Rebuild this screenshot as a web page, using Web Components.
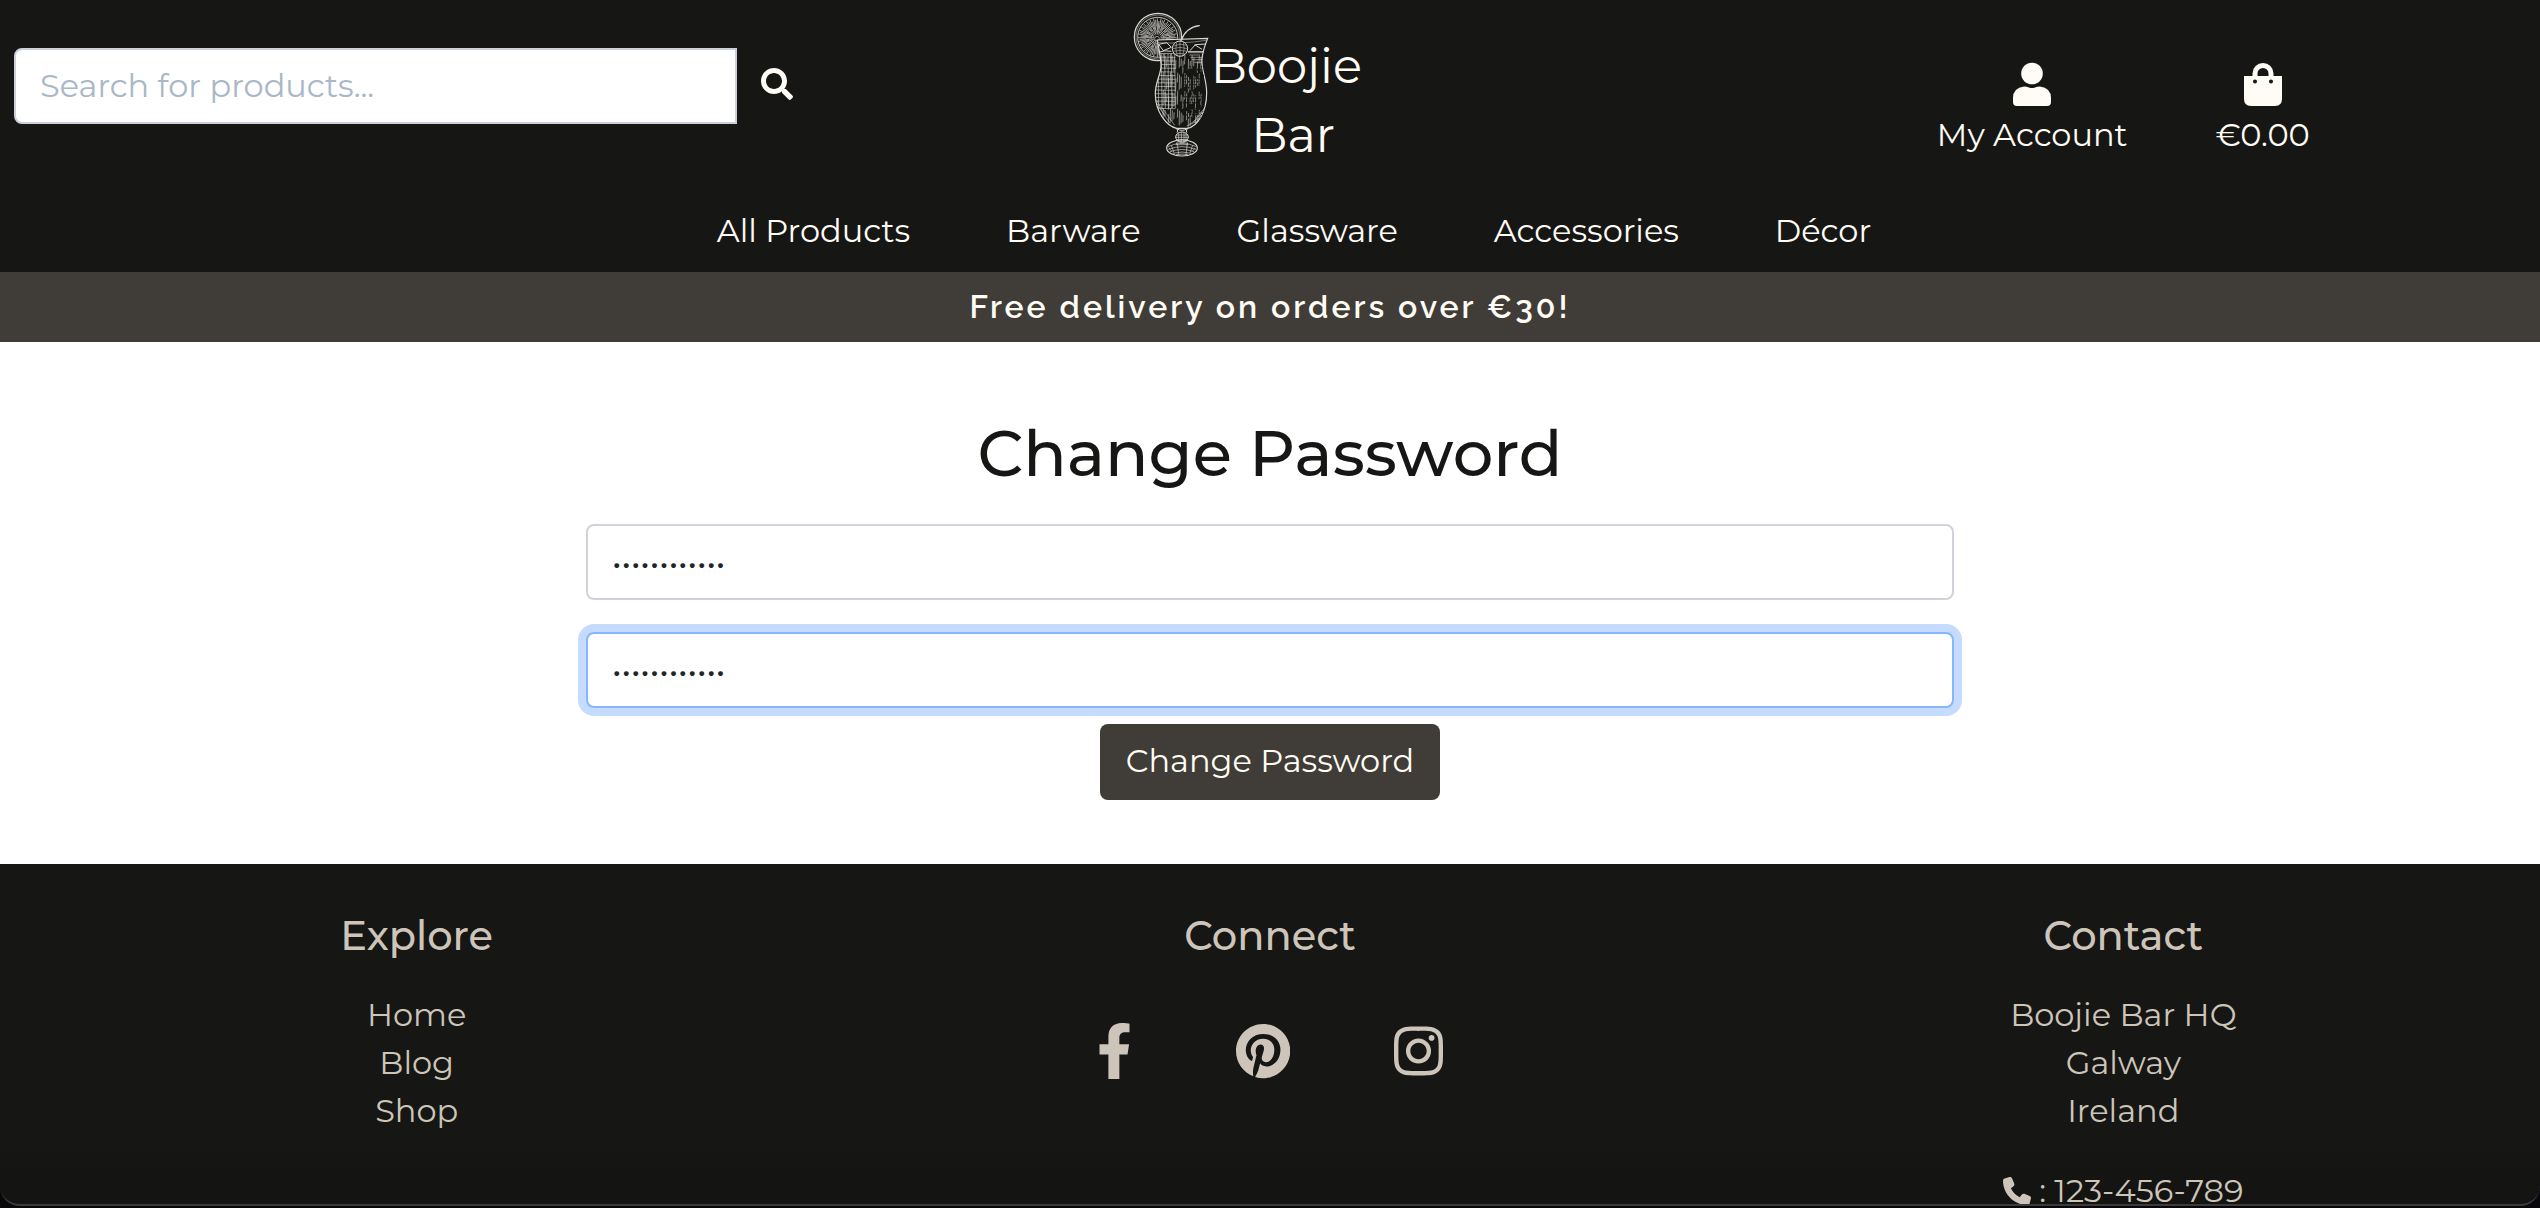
<!DOCTYPE html>
<html lang="en">
<head>
<meta charset="utf-8">
<meta name="viewport" content="width=device-width, initial-scale=1">
<title>Boojie Bar | Change Password</title>
<style>
  :root {
    --ink: #161614;
    --taupe: #403c37;
    --ivory: #fffcf5;
    --sand: #cdc5b9;
  }
  html, body { height: 100%; }
  body {
    margin: 0;
    overflow: hidden;
    background: #fff;
    color: var(--ink);
    font: 400 32px/48px Montserrat, Inter, "Open Sans", sans-serif;
  }
</style>
</head>
<body>
<boojie-page></boojie-page>

<script>
const define = (name, html, setup) => {
  const template = document.createElement('template');
  template.innerHTML = '<style>*,*::before,*::after{box-sizing:border-box}a{color:inherit;text-decoration:none}svg{display:block;fill:currentColor}</style>' + html;
  customElements.define(name, class extends HTMLElement {
    constructor() {
      super();
      this.attachShadow({ mode: 'open' }).append(template.content.cloneNode(true));
    }
    connectedCallback() { if (setup) setup(this, this.shadowRoot); }
  });
};

/* ---- Logo: engraved cocktail glass and the shop name ---- */
const line = (x1, y1, x2, y2) => `M${x1.toFixed(1)} ${y1.toFixed(1)}L${x2.toFixed(1)} ${y2.toFixed(1)}`;
const engraving = () => {
  let spokes = '', hatch = '', grid = '', dots = '';
  for (let i = 0; i < 64; i++) {
    const a = i * Math.PI / 32, inner = [10, 26, 16, 34][i % 4], outer = [58, 54, 59, 50][(i * 3) % 4];
    spokes += line(172 + inner * Math.cos(a), 113 + inner * Math.sin(a), 172 + outer * Math.cos(a), 113 + outer * Math.sin(a));
  }
  for (let i = 0; i < 22; i++) {
    const x = 190 + i * 5.4;
    for (let j = 0; j < 4; j++) {
      const y = 162 + j * 54 + (i * 29) % 23;
      const len = 20 + (i * 17 + j * 13) % 28;
      if ((i + j * 2) % 5 !== 3) hatch += line(x, y, x - 1, y + len);
    }
  }
  for (let y = 160; y < 330; y += 11) grid += line(160, y, 226, y + 1);
  for (let x = 174; x < 226; x += 10) grid += line(x, 160, x + 2, 325);
  for (let y = 200; y < 360; y += 9)
    for (let x = 252; x < 314; x += 9) dots += `<circle cx="${x + (y % 2) * 4}" cy="${y}" r="2.6"/>`;
  return { spokes, hatch, grid, dots };
};
const e = engraving();
const glass = 'M172 120L323 115C314 138 307 160 306 178C303 208 320 236 320 278C320 336 292 380 262 385H230C198 378 167 334 166 284C165 244 184 224 183 194C182 164 176 148 172 120Z';
define('boojie-logo', `
<style>
  :host { display: block; }
  svg { width: 340px; max-width: 100%; margin: 0 auto; }
  text { fill: var(--ivory); font: 400 144px Montserrat, Inter, sans-serif; }
</style>
<a href="#" aria-label="Boojie Bar home">
<svg viewBox="0 0 1020 540">
  <defs><clipPath id="bowl"><path d="${glass}"/></clipPath></defs>
  <g fill="none" stroke="#d9d7d2" stroke-width="2">
    <circle cx="174" cy="111" r="71" stroke-width="3.5"/>
    <circle cx="174" cy="111" r="66" stroke-width="1.5"/>
    <circle cx="173" cy="112" r="60" stroke-width="2.5"/>
    <path d="${e.spokes}" stroke-width="2.2"/>
    <circle cx="171" cy="116" r="7"/>
    <path d="${glass}" fill="#161614" stroke-width="3.5"/>
    <g clip-path="url(#bowl)">
      <path d="${e.hatch}" stroke-width="1.8"/>
      <path d="${e.grid}" stroke-width="1.8"/>
      <g fill="#161614" stroke="none">${e.dots}</g>
      <path d="M178 156Q194 150 214 154M264 155H312M270 152L286 134L318 132M284 134L306 148M176 133L200 128L214 142L190 152Z" stroke-width="3"/>
      <path d="M264 158H310M268 165H300M272 172H306M276 179H308M282 187H306M280 366L314 330M270 372L312 344M288 354L318 320M260 378L300 360M176 320L210 370M170 300L192 345M184 320L224 376" stroke-width="1.7"/>
    </g>
    <path d="M174 128Q250 132 318 121" stroke-width="1.5"/>
    <circle cx="240" cy="146" r="23" fill="#161614" stroke-width="3"/>
    <path d="M221 138Q240 128 260 136M218 146Q240 138 262 146M220 154Q240 148 261 154M226 162Q240 158 255 162M230 127Q224 146 232 167M240 123V169M250 127Q256 146 248 167" stroke-width="1.5"/>
    <path d="M243 122Q258 82 298 77" stroke-width="4" stroke-linecap="round"/>
    <path d="M230 386Q246 396 262 386M230 386Q236 394 231 398M262 386Q256 394 261 398" stroke-width="3"/>
    <ellipse cx="246" cy="411" rx="19" ry="15" stroke-width="3"/>
    <path d="M228 405H264M227 412H265M230 419H262M236 399V423M244 397V426M252 397V426M258 400V422M232 425Q246 433 260 425L264 434H228Z"/>
    <ellipse cx="246" cy="444" rx="46" ry="24" stroke-width="3.5"/>
    <path d="M203 440Q246 420 289 440M205 448Q246 432 287 448M210 455Q246 442 282 455M218 460Q246 452 274 460M228 464Q246 460 264 464M214 436L222 458M232 430L236 464M262 430L258 464M278 436L270 458M206 444L216 454M286 444L276 454" stroke-width="2"/>
  </g>
  <text x="332" y="250">Boojie</text>
  <text x="454" y="456">Bar</text>
</svg></a>`);

/* ---- Product search ---- */
define('product-search', `
<style>
  :host { display: block; }
  form { display: flex; padding: 48px 16px 0 14px; }
  input {
    flex: 1; min-width: 0; height: 76px; padding: 0 24px 2px; border: 2px solid #cbd0dc;
    border-radius: 8px 0 0 8px; background: #fff; color: var(--ink); font: inherit; outline: 0;
  }
  input::placeholder { color: #a9b7c6; opacity: 1; }
  button { width: 80px; height: 72px; padding: 0; border: 0; background: none; color: var(--ivory); display: grid; place-items: center; }
</style>
<form role="search">
  <input type="search" aria-label="Search for products" placeholder="Search for products...">
  <button type="button" aria-label="Search"><svg width="32" height="32" viewBox="0 0 512 512"><path d="M505 442.700L405.300 343c-4.500-4.500-10.600-7-17-7H372c27.600-35.300 44-79.700 44-128C416 93.100 322.900 0 208 0S0 93.100 0 208s93.100 208 208 208c48.300 0 92.700-16.400 128-44v16.300c0 6.400 2.500 12.500 7 17l99.700 99.700c9.400 9.400 24.600 9.400 33.900 0l28.300-28.300c9.400-9.400 9.400-24.600.1-34zM208 336c-70.700 0-128-57.200-128-128 0-70.700 57.200-128 128-128 70.700 0 128 57.200 128 128 0 70.700-57.200 128-128 128z"/></svg></button>
</form>`);

/* ---- Account and bag links ---- */
define('account-links', `
<style>
  :host { display: flex; justify-content: center; gap: 88px; padding-top: 60px; color: var(--ivory); }
  a { display: flex; flex-direction: column; align-items: center; gap: 3px; white-space: nowrap; }
</style>
<a href="#"><svg width="40" height="48" viewBox="0 0 40 48"><circle cx="20" cy="13.500" r="10.800"/><path d="M12 26.500Q15 26.500 17 27.500Q20 28.500 23 27.500Q25 26.500 28 26.500Q39 28 39 38V42Q39 46 35 46H5Q1 46 1 42V38Q1 28 12 26.500Z"/></svg><span>My Account</span></a>
<a href="#"><svg width="40" height="48" viewBox="0 0 40 48"><path fill-rule="evenodd" d="M1 16H9.500V13.500A10.500 10.500 0 0 1 30.500 13.500V16H39V39Q39 46 32 46H8Q1 46 1 39ZM14.500 16H25.500V13.500A5.500 5.500 0 0 0 14.500 13.500ZM14 21.500A2 2 0 1 0 10 21.500A2 2 0 1 0 14 21.500ZM30 21.500A2 2 0 1 0 26 21.500A2 2 0 1 0 30 21.500Z"/></svg><span>€0.00</span></a>`);

/* ---- Header ---- */
define('site-header', `
<style>
  :host { display: block; background: var(--ink); color: var(--ivory); }
  .top { display: grid; grid-template-columns: repeat(3, minmax(0, 1fr)); column-gap: 20px; }
  nav { display: flex; justify-content: center; gap: 96px; padding: 27px 0 17px 48px; white-space: nowrap; }
</style>
<header>
  <div class="top"><product-search></product-search><boojie-logo></boojie-logo><account-links></account-links></div>
  <nav aria-label="Shop"><a href="#">All Products</a><a href="#">Barware</a><a href="#">Glassware</a><a href="#">Accessories</a><a href="#">Décor</a></nav>
</header>`);

define('delivery-banner', `
<style>
  :host { display: block; padding: 11px 0; background: var(--taupe); color: var(--ivory); text-align: center;
    font-family: Raleway, Lato, sans-serif; font-weight: 600; letter-spacing: 3px; }
</style>
<slot></slot>`);

/* ---- Password form ---- */
define('password-field', `
<style>
  :host { display: block; }
  input {
    display: block; width: 100%; height: 76px; padding: 0 24px; border: 2px solid #ced4da; border-radius: 8px;
    background: #fff; color: #212529; font: inherit; outline: 0; caret-color: transparent;
  }
  :host([active]) input, input:focus { border-color: #86b7fe; box-shadow: 0 0 0 8px #c5dbff; }
</style>
<input type="password" value="cocktails123" autocomplete="new-password">`,
(host, root) => root.querySelector('input').setAttribute('aria-label', host.getAttribute('label')));

define('change-password', `
<style>
  :host { display: block; padding: 72px 24px 64px; }
  form { display: flex; flex-direction: column; max-width: 1368px; margin: 0 auto; }
  h1 { margin: 0 0 32px; font-size: 64px; line-height: 78px; font-weight: 500; text-align: center; }
  password-field + password-field { margin-top: 32px; }
  button { align-self: center; height: 76px; margin-top: 16px; padding: 0 26px 2px; border: 0; border-radius: 8px;
    background: var(--taupe); color: var(--ivory); font: inherit; }
</style>
<form>
  <h1>Change Password</h1>
  <password-field label="New password"></password-field>
  <password-field label="New password (again)" active></password-field>
  <button type="button">Change Password</button>
</form>`);

/* ---- Footer ---- */
define('footer-column', `
<style>
  :host { display: block; text-align: center; }
  h2 { margin: 0 0 31px; font-size: 40px; line-height: 48px; font-weight: 500; }
</style>
<h2><slot name="title"></slot></h2><slot></slot>`);

define('site-footer', `
<style>
  :host { display: block; min-height: 344px; background: linear-gradient(var(--ink) 280px, #131311 340px); color: var(--sand); }
  footer { display: grid; grid-template-columns: repeat(3, minmax(0, 1fr)); column-gap: 20px; padding: 48px 0; }
  ul { list-style: none; margin: 0; padding: 0; }
  .social { display: flex; justify-content: center; gap: 104px; padding-top: 32px; }
  .social svg { height: 56px; }
  address { font-style: normal; }
  .phone { display: flex; justify-content: center; align-items: center; gap: 8px; margin-top: 32px; }
</style>
<footer>
  <footer-column><span slot="title">Explore</span>
    <ul><li><a href="#">Home</a></li><li><a href="#">Blog</a></li><li><a href="#">Shop</a></li></ul>
  </footer-column>
  <footer-column><span slot="title">Connect</span>
    <div class="social">
      <a href="#" aria-label="Facebook"><svg viewBox="0 0 320 512"><path d="M279.140 288l14.220-92.660h-88.910v-60.130c0-25.350 12.420-50.060 52.240-50.060h40.420V6.260S260.430 0 225.360 0c-73.220 0-121.080 44.380-121.080 124.720v70.620H22.890V288h81.390v224h100.170V288z"/></svg></a>
      <a href="#" aria-label="Pinterest"><svg viewBox="0 0 496 512"><path d="M496 256c0 137-111 248-248 248-25.600 0-50.200-3.900-73.400-11.100 10.100-16.500 25.200-43.500 30.800-65 3-11.600 15.400-59 15.400-59 8.100 15.400 31.700 28.500 56.800 28.500 74.800 0 128.700-68.800 128.700-154.300 0-81.900-66.900-143.200-152.900-143.200-107 0-163.900 71.800-163.900 150.100 0 36.400 19.400 81.700 50.300 96.100 4.700 2.200 7.200 1.200 8.300-3.300.8-3.400 5-20.300 6.900-28.100.6-2.500.3-4.700-1.700-7.100-10.100-12.500-18.300-35.300-18.300-56.600 0-54.700 41.400-107.600 112-107.600 60.900 0 103.600 41.500 103.600 100.900 0 67.100-33.900 113.600-78 113.600-24.300 0-42.600-20.100-36.700-44.800 7-29.500 20.500-61.300 20.500-82.600 0-19-10.200-34.900-31.400-34.900-24.900 0-44.900 25.700-44.900 60.200 0 22 7.400 36.800 7.400 36.800s-24.500 103.800-29 123.200c-5 21.400-3 51.600-.9 71.200C65.400 450.900 0 361.100 0 256 0 119 111 8 248 8s248 111 248 248z"/></svg></a>
      <a href="#" aria-label="Instagram"><svg viewBox="0 0 448 512"><path d="M224.100 141c-63.600 0-114.900 51.300-114.900 114.900s51.300 114.900 114.900 114.900S339 319.500 339 255.900 287.700 141 224.100 141zm0 189.600c-41.100 0-74.700-33.500-74.700-74.700s33.500-74.700 74.700-74.700 74.700 33.500 74.700 74.700-33.600 74.700-74.700 74.700zm146.400-194.300c0 14.900-12 26.800-26.800 26.800-14.900 0-26.800-12-26.800-26.800s12-26.800 26.800-26.800 26.800 12 26.800 26.800zm76.100 27.200c-1.700-35.900-9.900-67.700-36.200-93.900-26.200-26.200-58-34.400-93.900-36.200-37-2.100-147.900-2.100-184.900 0-35.800 1.700-67.600 9.900-93.900 36.100s-34.400 58-36.200 93.900c-2.100 37-2.100 147.900 0 184.900 1.700 35.900 9.900 67.700 36.200 93.900s58 34.400 93.900 36.200c37 2.100 147.900 2.100 184.900 0 35.900-1.700 67.700-9.900 93.900-36.200 26.200-26.200 34.400-58 36.200-93.900 2.100-37 2.100-147.800 0-184.800zM398.800 388c-7.800 19.600-22.900 34.700-42.600 42.600-29.500 11.700-99.500 9-132.100 9s-102.700 2.600-132.100-9c-19.600-7.800-34.700-22.900-42.600-42.600-11.700-29.500-9-99.500-9-132.100s-2.600-102.700 9-132.100c7.800-19.600 22.900-34.700 42.600-42.600 29.500-11.700 99.500-9 132.100-9s102.700-2.600 132.100 9c19.600 7.800 34.700 22.900 42.600 42.600 11.700 29.500 9 99.500 9 132.100s2.700 102.700-9 132.100z"/></svg></a>
    </div>
  </footer-column>
  <footer-column><span slot="title">Contact</span>
    <address>Boojie Bar HQ<br>Galway<br>Ireland
      <a class="phone" href="tel:123456789"><svg width="28" height="28" viewBox="0 0 512 512"><path d="M164.900 24.600c-7.700-18.600-28-28.500-47.400-23.200l-88 24C12.100 30.200 0 46 0 64c0 247.400 200.600 448 448 448 18 0 33.800-12.100 38.600-29.500l24-88c5.300-19.400-4.600-39.700-23.200-47.400l-96-40c-16.300-6.800-35.200-2.100-46.300 11.600L304.700 368C234.300 334.700 177.300 277.700 144 207.300l49.300-40.300c13.700-11.200 18.400-30 11.600-46.300l-40-96.100z"/></svg><span>: 123-456-789</span></a>
    </address>
  </footer-column>
</footer>`);

/* ---- Rounded window edge laid over the bottom of the page ---- */
define('window-edge', `
<style>
  :host { position: fixed; inset: 0 0 2px; overflow: visible; pointer-events: none;
    border-bottom: 2px solid #3b3b39; border-radius: 0 0 20px 20px; box-shadow: 0 0 0 20px #08070c; }
</style>`);

define('boojie-page', `
<style>
  :host { display: flex; flex-direction: column; min-height: 100%; }
  site-footer { flex: 1; }
</style>
<site-header></site-header>
<delivery-banner>Free delivery on orders over €30!</delivery-banner>
<main><change-password></change-password></main>
<site-footer></site-footer>
<window-edge></window-edge>`);
</script>
</body>
</html>
